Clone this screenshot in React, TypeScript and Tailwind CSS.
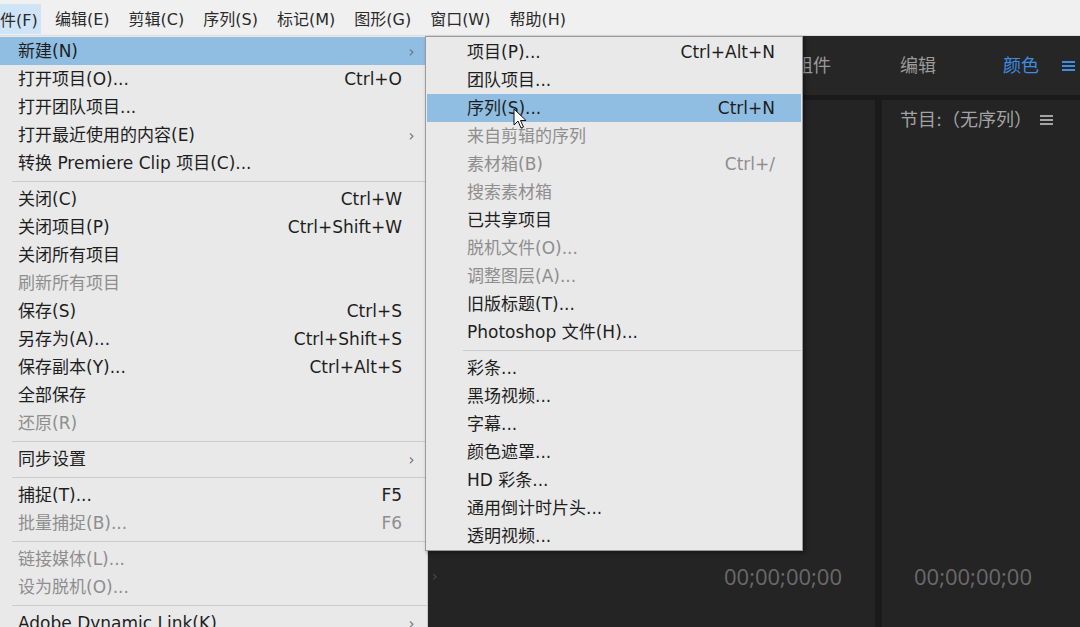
import React from "react";

type Item =
  | { sep: true }
  | { label: string; shortcut?: string; sub?: boolean; disabled?: boolean; active?: boolean };

const font = { fontFamily: '"DejaVu Sans", "Noto Sans CJK SC", sans-serif' };

const fileMenu: Item[] = [
  { label: "新建(N)", sub: true, active: true },
  { label: "打开项目(O)...", shortcut: "Ctrl+O" },
  { label: "打开团队项目..." },
  { label: "打开最近使用的内容(E)", sub: true },
  { label: "转换 Premiere Clip 项目(C)..." },
  { sep: true },
  { label: "关闭(C)", shortcut: "Ctrl+W" },
  { label: "关闭项目(P)", shortcut: "Ctrl+Shift+W" },
  { label: "关闭所有项目" },
  { label: "刷新所有项目", disabled: true },
  { label: "保存(S)", shortcut: "Ctrl+S" },
  { label: "另存为(A)...", shortcut: "Ctrl+Shift+S" },
  { label: "保存副本(Y)...", shortcut: "Ctrl+Alt+S" },
  { label: "全部保存" },
  { label: "还原(R)", disabled: true },
  { sep: true },
  { label: "同步设置", sub: true },
  { sep: true },
  { label: "捕捉(T)...", shortcut: "F5" },
  { label: "批量捕捉(B)...", shortcut: "F6", disabled: true },
  { sep: true },
  { label: "链接媒体(L)...", disabled: true },
  { label: "设为脱机(O)...", disabled: true },
  { sep: true },
  { label: "Adobe Dynamic Link(K)", sub: true },
];

const newMenu: Item[] = [
  { label: "项目(P)...", shortcut: "Ctrl+Alt+N" },
  { label: "团队项目..." },
  { label: "序列(S)...", shortcut: "Ctrl+N", active: true },
  { label: "来自剪辑的序列", disabled: true },
  { label: "素材箱(B)", shortcut: "Ctrl+/", disabled: true },
  { label: "搜索素材箱", disabled: true },
  { label: "已共享项目" },
  { label: "脱机文件(O)...", disabled: true },
  { label: "调整图层(A)...", disabled: true },
  { label: "旧版标题(T)..." },
  { label: "Photoshop 文件(H)..." },
  { sep: true },
  { label: "彩条..." },
  { label: "黑场视频..." },
  { label: "字幕..." },
  { label: "颜色遮罩..." },
  { label: "HD 彩条..." },
  { label: "通用倒计时片头..." },
  { label: "透明视频..." },
];

function MenuRows({ items, left, arrows, sepLeft }: { items: Item[]; left: string; arrows: boolean; sepLeft: string }) {
  return (
    <>
      {items.map((it, i) =>
        "sep" in it ? (
          <div key={i} className="h-[8px] flex items-center">
            <div className={"h-px flex-1 bg-[#cbcbcb] " + sepLeft} />
          </div>
        ) : (
          <div
            key={i}
            className={
              "h-[28px] flex items-center pt-[2px] text-[17px] " +
              left +
              (it.active ? " bg-[#90bde2]" : "") +
              (it.disabled ? " text-[#8e8e8e]" : " text-[#1e1e1e]")
            }
          >
            <span className="flex-1 whitespace-nowrap">{it.label}</span>
            {it.shortcut && <span className="whitespace-nowrap">{it.shortcut}</span>}
            {arrows && (
              <span className="w-[19px] text-center text-[#707070] text-[15px]">{it.sub ? "›" : ""}</span>
            )}
          </div>
        )
      )}
    </>
  );
}

function Burger({ color }: { color: string }) {
  return (
    <svg width="13" height="12" viewBox="0 0 13 12">
      <rect x="0" y="1" width="13" height="2" fill={color} />
      <rect x="0" y="5" width="13" height="2" fill={color} />
      <rect x="0" y="9" width="13" height="2" fill={color} />
    </svg>
  );
}

export default function App() {
  const bar = ["编辑(E)", "剪辑(C)", "序列(S)", "标记(M)", "图形(G)", "窗口(W)", "帮助(H)"];
  return (
    <div className="relative w-[1080px] h-[627px] overflow-hidden flex flex-col bg-[#222]" style={font}>
      <div className="h-[36px] bg-[#f0f0f0] border-b border-[#dcdcdc] flex items-center text-[16px] text-[#2a2a2a]">
        <div className="h-[30px] mt-[3px] w-[41px] bg-[#cfe4f6] flex items-center pt-[3px]">件(F)</div>
        <div className="flex items-center gap-[19px] ml-[14px] pt-[5px]">
          {bar.map((b) => (
            <span key={b} className="whitespace-nowrap">{b}</span>
          ))}
        </div>
      </div>

      <div className="flex-1 flex flex-col bg-[#1a1a1a]">
        <div className="h-[59px] bg-[#262626] flex items-center text-[18px] text-[#9b9b9b] pl-[795px]">
          <span>组件</span>
          <span className="ml-[69px]">编辑</span>
          <span className="ml-[67px] text-[#3d8de0]">颜色</span>
          <span className="ml-[23px]"><Burger color="#3d8de0" /></span>
        </div>
        <div className="flex-1 flex gap-[7px] mt-[5px]">
          <div className="w-[875px] bg-[#242424] flex flex-col justify-end pb-[34px]">
            <div className="flex items-center">
              <span className="ml-[432px] text-[#4a4a4a] text-[14px]">›</span>
              <span className="ml-auto mr-[33px] text-[22px] text-[#6a6a6a]" style={{ fontFamily: '"Open Sans", sans-serif' }}>
                00;00;00;00
              </span>
            </div>
          </div>
          <div className="flex-1 bg-[#242424] flex flex-col pl-[18px] pb-[34px]">
            <div className="mt-[6px] text-[18px] text-[#a3a3a3] flex items-center gap-[8px]">
              <span>节目:（无序列）</span>
              <Burger color="#a3a3a3" />
            </div>
            <div className="mt-auto pl-[14px] text-[22px] text-[#6a6a6a]" style={{ fontFamily: '"Open Sans", sans-serif' }}>
              00;00;00;00
            </div>
          </div>
        </div>
      </div>

      <div className="absolute left-0 top-[36px] w-[428px] h-[600px] bg-[#e9e9e9] border-r border-[#c8c8c8] pt-[1px]">
        <MenuRows items={fileMenu} left="pl-[18px] pr-[6px]" arrows sepLeft="ml-[12px]" />
      </div>

      <div className="absolute left-[425px] top-[36px] w-[378px] bg-[#e9e9e9] border border-[#9a9a9a] pt-[1px] pb-0 shadow-[2px_2px_4px_rgba(0,0,0,0.4)]">
        <div className="px-[1px]">
          <MenuRows items={newMenu} left="pl-[40px] pr-[26px]" arrows={false} sepLeft="ml-[36px]" />
        </div>
      </div>

      <svg className="absolute left-[513px] top-[108px]" width="15" height="22" viewBox="0 0 15 22">
        <path d="M1 1 L1 17 L5 13 L8 20 L10.5 19 L7.5 12.5 L13 12.5 Z" fill="#fff" stroke="#111" strokeWidth="1" strokeLinejoin="round" />
      </svg>
    </div>
  );
}
